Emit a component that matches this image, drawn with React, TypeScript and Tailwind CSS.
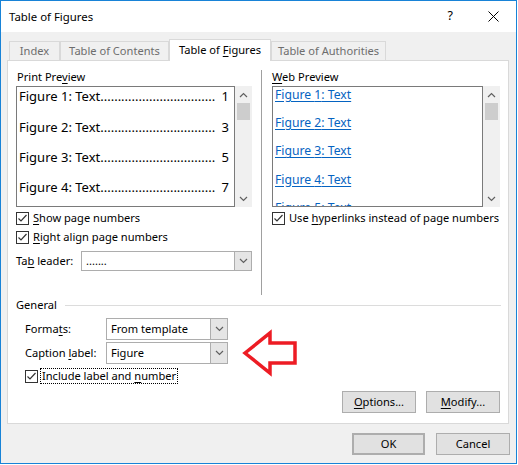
import React from "react";

function U({ children }: { children: React.ReactNode }) {
  return <span className="underline underline-offset-[2px]">{children}</span>;
}

function Check() {
  return (
    <div className="flex h-[13px] w-[13px] shrink-0 items-center justify-center border border-[#333] bg-white">
      <svg width="11" height="11" viewBox="0 0 11 11">
        <polyline points="1.5,5.5 4,8 9.5,2" fill="none" stroke="#333" strokeWidth="1.2" />
      </svg>
    </div>
  );
}

function Chevron({ up = false }: { up?: boolean }) {
  return (
    <svg width="9" height="6" viewBox="0 0 9 6">
      <polyline
        points={up ? "1,5 4.5,1.5 8,5" : "1,1 4.5,4.5 8,1"}
        fill="none"
        stroke="#606060"
        strokeWidth="1.2"
      />
    </svg>
  );
}

function Combo({ value, className }: { value: string; className: string }) {
  return (
    <div className={`flex border border-[#adadad] bg-white ${className}`}>
      <div className="flex flex-1 items-center pl-[4px]">{value}</div>
      <div className="flex w-[17px] items-center justify-center border-l border-[#adadad] bg-[#e5e5e5]">
        <Chevron />
      </div>
    </div>
  );
}

function ScrollBar() {
  return (
    <div className="flex w-[17px] flex-col bg-[#f0f0f0]">
      <div className="flex h-[17px] items-center justify-center">
        <Chevron up />
      </div>
      <div className="mx-[2px] h-[17px] bg-[#cdcdcd]" />
      <div className="flex-1" />
      <div className="flex h-[17px] items-center justify-center">
        <Chevron />
      </div>
    </div>
  );
}

// leader dots, sized to end just before the page number
const dots = ".".repeat(33);

function Button({ children, className = "" }: { children: React.ReactNode; className?: string }) {
  return (
    <div className={`flex h-[22px] items-center justify-center border border-[#adadad] bg-[#e1e1e1] ${className}`}>
      {children}
    </div>
  );
}

export default function App() {
  const tabs = [
    { label: "Index", w: "w-[51px]" },
    { label: "Table of Contents", w: "w-[109px]" },
  ];

  return (
    <div className="h-[465px] w-[518px] bg-white font-['Segoe_UI','Noto_Sans',sans-serif] text-[11.1px] text-black">
      <div className="relative flex h-[464px] w-[517px] flex-col border border-[#1883d7]">
        {/* title bar */}
        <div className="flex h-[31px] items-center bg-white pl-[8px] text-[11.4px]">
          <span>Table of Figures</span>
          <span className="ml-auto mr-[35px] text-[12.5px]">?</span>
          <svg width="11" height="11" viewBox="0 0 11 11" className="mr-[17px]">
            <path d="M0.5 0.5 L10.5 10.5 M10.5 0.5 L0.5 10.5" stroke="#000" strokeWidth="1" />
          </svg>
        </div>

        <div className="flex flex-1 flex-col bg-[#f0f0f0]">
          {/* tabs */}
          <div className="flex h-[28px] items-end pl-[8px]">
            {tabs.map((t) => (
              <div
                key={t.label}
                className={`flex h-[19px] items-center justify-center border border-b-0 border-[#d9d9d9] text-[#6d6d6d] ${t.w}`}
              >
                {t.label}
              </div>
            ))}
            <div className="relative z-10 -mb-px flex h-[22px] w-[102px] items-center justify-center border border-b-0 border-[#d9d9d9] bg-white">
              Table of&nbsp;<U>F</U>igures
            </div>
            <div className="flex h-[19px] w-[115px] items-center justify-center border border-b-0 border-[#d9d9d9] text-[#6d6d6d]">
              Table of Authorities
            </div>
          </div>

          {/* panel */}
          <div className="ml-[6px] mr-[7px] flex h-[364px] flex-col border border-[#d9d9d9] bg-white">
            <div className="flex h-[234px] pl-[8px] pt-[8px]">
              {/* left column */}
              <div className="flex w-[236px] flex-col">
                <div className="h-[16px] leading-[16px] pl-px">
                  Print Pre<U>v</U>iew
                </div>
                <div className="mt-px flex h-[121px]">
                  <div className="flex-1 overflow-hidden border border-[#7a7a7a] pl-[2px] pr-[5px] font-['Noto_Sans',sans-serif] text-[13px]">
                    {[1, 2, 3, 4].map((n, i) => (
                      <div key={n} className="mb-[10.3px] flex h-[20px] items-center justify-between whitespace-nowrap">
                        <span>
                          Figure {i + 1}: Text{dots}
                        </span>
                        <span>{n * 2 - 1}</span>
                      </div>
                    ))}
                  </div>
                  <ScrollBar />
                </div>
                <div className="mt-[4px] flex h-[15px] items-center gap-[4px]">
                  <Check />
                  <span>
                    <U>S</U>how page numbers
                  </span>
                </div>
                <div className="mt-[4px] flex h-[15px] items-center gap-[4px]">
                  <Check />
                  <span>
                    <U>R</U>ight align page numbers
                  </span>
                </div>
                <div className="mt-[6px] flex items-center">
                  <span className="w-[65px]">
                    Ta<U>b</U> leader:
                  </span>
                  <Combo value="......." className="h-[20px] w-[171px]" />
                </div>
              </div>

              {/* separator */}
              <div className="ml-[9px] mt-px w-px bg-[#a0a0a0]" />

              {/* right column */}
              <div className="ml-[10px] flex w-[228px] flex-col">
                <div className="h-[16px] leading-[16px]">
                  <U>W</U>eb Preview
                </div>
                <div className="mt-px flex h-[121px]">
                  <div className="flex-1 overflow-hidden border border-[#7a7a7a] pl-[2px] font-['Noto_Sans',sans-serif] text-[12.2px] text-[#0563c1]">
                    {[1, 2, 3, 4, 5].map((n) => (
                      <div key={n} className="h-[28.2px] leading-[16px]">
                        <span className="underline underline-offset-[2px]">Figure {n}: Text</span>
                      </div>
                    ))}
                  </div>
                  <ScrollBar />
                </div>
                <div className="mt-[4px] flex h-[15px] items-center gap-[4px]">
                  <Check />
                  <span className="whitespace-nowrap">
                    Use <U>h</U>yperlinks instead of page numbers
                  </span>
                </div>
              </div>
            </div>

            {/* General group */}
            <div className="mt-[2px] flex items-center pl-[8px] pr-[7px]">
              <span className="leading-[16px]">General</span>
              <div className="ml-[8px] h-px flex-1 bg-[#dcdcdc]" />
            </div>
            <div className="mt-[5px] flex items-center pl-[17px]">
              <span className="w-[81px]">
                Forma<U>t</U>s:
              </span>
              <Combo value="From template" className="h-[22px] w-[122px]" />
            </div>
            <div className="mt-[2px] flex items-center pl-[17px]">
              <span className="w-[81px]">
                Caption <U>l</U>abel:
              </span>
              <Combo value="Figure" className="h-[22px] w-[122px]" />
            </div>
            <div className="mt-[4px] flex items-center pl-[17px]">
              <Check />
              <span className="ml-[2px] border border-dotted border-black px-px leading-[14px]">
                Include label and <U>n</U>umber
              </span>
            </div>
            <div className="mt-[7px] flex justify-end gap-[10px] pr-[8px]">
              <Button className="w-[74px]">
                <span>
                  <U>O</U>ptions...
                </span>
              </Button>
              <Button className="w-[74px]">
                <span>
                  <U>M</U>odify...
                </span>
              </Button>
            </div>
          </div>

          {/* dialog buttons */}
          <div className="mt-[9px] flex justify-end gap-[11px] pr-[6px]">
            <Button className="w-[73px] border-2 border-[#0078d7]">OK</Button>
            <Button className="w-[74px]">Cancel</Button>
          </div>
        </div>

        {/* red annotation arrow */}
        <svg className="absolute left-[239px] top-[327px]" width="60" height="50" viewBox="239 327 60 50">
          <polygon
            points="244,352 269,332 269,342 294,342 294,362 269,362 269,372"
            fill="none"
            stroke="#ed1c24"
            strokeWidth="3.5"
          />
        </svg>
      </div>
    </div>
  );
}
